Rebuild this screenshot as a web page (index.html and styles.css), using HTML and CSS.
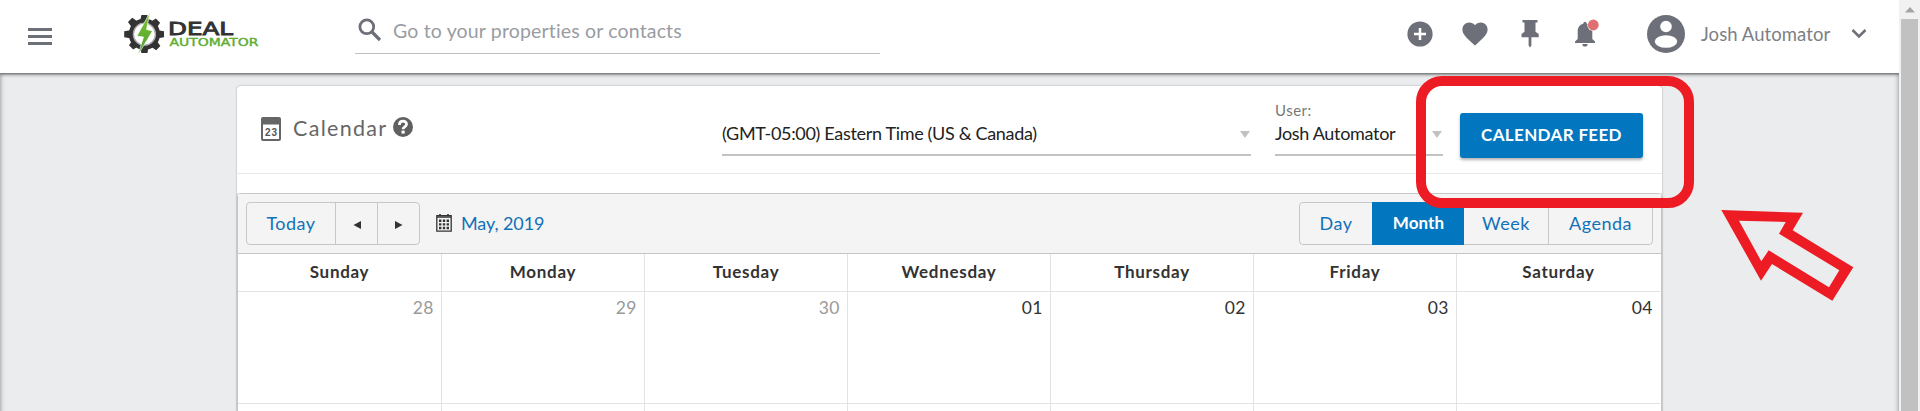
FILE: index.html
```
<!DOCTYPE html>
<html lang="en">
<head>
    <meta charset="UTF-8">
    <meta name="viewport" content="width=device-width, initial-scale=1.0">
    <title>Calendar - Deal Automator</title>
    <link rel="stylesheet" href="styles.css">
</head>
<body>

    <div class="page">
        <header class="topbar">
            <button class="menu-button" aria-label="Menu"><span></span><span></span><span></span></button>

            <!-- Logo -->
            <svg class="logo" width="140" height="50" viewBox="122 9 140 50">
                <defs>
                    <linearGradient id="green" x1="0" y1="0" x2="0" y2="1">
                        <stop offset="0" stop-color="#7ac92e"/>
                        <stop offset="1" stop-color="#4f9a32"/>
                    </linearGradient>
                </defs>
                <g fill="#333">
                    <g id="teeth">
                        <path d="M141.4 15h6l1 5h-8zM141.4 53h6l1-5h-8z"/>
                        <path d="M124.2 31.200v6l6 1v-8zM164 31.200v6l-6 1v-8z"/>
                    </g>
                    <use href="#teeth" transform="rotate(45 144.4 34.200)"/>
                </g>
                <circle cx="144.400" cy="34.200" r="13.400" fill="#fff" stroke="#333" stroke-width="4.500"/>
                <circle cx="144.400" cy="34.200" r="11" fill="none" stroke="#a9a9a9" stroke-width="1.300"/>
                <path d="M150 12.300 137 36l6.500 1-5.500 18 14.500-24-6-1.500z" fill="url(#green)" stroke="#fff" stroke-width=".6"/>
                <text class="logo-deal" x="168" y="35" textLength="65" lengthAdjust="spacingAndGlyphs">DEAL</text>
                <text class="logo-auto" x="169.500" y="46" textLength="89" lengthAdjust="spacingAndGlyphs">AUTOMATOR</text>
            </svg>

            <div class="search">
                <svg width="24" height="24" viewBox="0 0 24 24"><circle cx="8.800" cy="8.800" r="6.900" fill="none" stroke="#6d7078" stroke-width="2.800"/><path d="M13.500 13.500 22 22" stroke="#6d7078" stroke-width="3.200"/></svg>
                <span>Go to your properties or contacts</span>
            </div>

            <nav class="actions">
                <svg width="26" height="28" viewBox="0 0 26 28"><circle cx="13" cy="14" r="12.600"/><path class="cut" d="M13 8v12M7 14h12"/></svg>
                <svg width="26" height="28" viewBox="0 0 26 28"><path d="M13 25.500 11.200 23.900C4.600 18 .4 14.300.4 9.500.4 5.700 3.400 2.600 7.300 2.600c2.200 0 4.300 1 5.700 2.700 1.400-1.700 3.500-2.700 5.700-2.700 3.900 0 6.900 3.100 6.900 6.900 0 4.800-4.200 8.500-10.800 14.400z"/></svg>
                <svg width="26" height="28" viewBox="0 0 26 28"><path d="M5.500 0h15v2.600h-2v9.200l3.200 2.200v3.200h-7.300v8.300L13 27.500l-1.400-2v-8.300H4.500V14l3-2.200V2.600h-2z"/></svg>
                <svg width="26" height="28" viewBox="0 0 26 28"><path d="M13 2c1 0 1.700.7 1.800 1.700 3.500.8 5.500 3.700 5.500 7.500V19l2.700 2.600V23H3v-1.400L5.700 19v-7.800c0-3.800 2-6.700 5.500-7.500C11.300 2.700 12 2 13 2zM10.400 24h5.200a2.600 2.600 0 0 1-5.200 0z"/><circle cx="21.300" cy="5" r="6" fill="#fff"/><circle cx="21.300" cy="5" r="5.400" fill="#df6f70"/></svg>
            </nav>

            <div class="account">
                <svg width="38" height="38" viewBox="0 0 38 38"><circle cx="19" cy="19" r="19" fill="#6d7078"/><circle cx="19" cy="11.500" r="5.800" fill="#fff"/><ellipse cx="19" cy="26.500" rx="11.200" ry="6.300" fill="#fff"/></svg>
                <span>Josh Automator</span>
                <svg width="16" height="12" viewBox="0 0 16 12"><path d="m1.500 2 6.500 6.500L14.500 2" fill="none" stroke="#6d7078" stroke-width="2.500"/></svg>
            </div>
        </header>

        <main class="content">
            <section class="card">
                <div class="card-header">
                    <svg class="title-icon" width="20" height="25" viewBox="0 0 20 25"><path fill="#666" d="M2 0h16q2 0 2 2v20q0 2-2 2H2q-2 0-2-2V2Q0 0 2 0z"/><path fill="#fff" d="M2 7.500h16V22H2z"/><text x="4" y="18.500" textLength="12">23</text></svg>
                    <h1>Calendar</h1>
                    <svg class="help" width="20" height="20" viewBox="0 0 20 20"><circle cx="10" cy="10" r="10" fill="#606060"/><path d="M6.500 8V7.500C6.500 3 13.500 3 13.500 7.300c0 2.700-3.500 2.400-3.500 5" fill="none" stroke="#fff" stroke-width="2.800"/><path fill="#fff" d="M8.500 13.600h3.200v3H8.500z"/></svg>

                    <div class="select timezone">
                        <span>(GMT-05:00) Eastern Time (US &amp; Canada)</span>
                        <i class="caret"></i>
                    </div>
                    <div class="user-field">
                        <label>User:</label>
                        <div class="select">
                            <span>Josh Automator</span>
                            <i class="caret"></i>
                        </div>
                    </div>
                    <button class="feed-button">CALENDAR FEED</button>
                </div>

                <div class="scheduler">
                    <div class="toolbar">
                        <div class="button-group">
                            <button class="today">Today</button>
                            <button class="arrow"><svg width="8" height="8"><path d="M8 0v8L.5 4z"/></svg></button>
                            <button class="arrow"><svg width="8" height="8"><path d="M0 0v8l7.500-4z"/></svg></button>
                        </div>
                        <svg class="date-icon" width="16" height="18" viewBox="0 0 16 18"><path fill="none" stroke="#333" stroke-width="1.300" d="M.8 1.600h14.400v15.600H.8z"/><path stroke="#333" stroke-width="1.600" d="M1 3h14M4 0v2M12 0v2"/><path stroke="#333" stroke-width="2.400" stroke-dasharray="2.400 1.400" d="M3 6.800h10M3 10.400h10M3 14h10"/></svg>
                        <a class="date-label">May, 2019</a>
                        <div class="button-group views">
                            <button class="day">Day</button>
                            <button class="month active">Month</button>
                            <button class="week">Week</button>
                            <button class="agenda">Agenda</button>
                        </div>
                    </div>

                    <div class="grid">
                        <div class="weekday">Sunday</div>
                        <div class="weekday">Monday</div>
                        <div class="weekday">Tuesday</div>
                        <div class="weekday">Wednesday</div>
                        <div class="weekday">Thursday</div>
                        <div class="weekday">Friday</div>
                        <div class="weekday">Saturday</div>
                        <div class="cell other">28</div>
                        <div class="cell other">29</div>
                        <div class="cell other">30</div>
                        <div class="cell">01</div>
                        <div class="cell">02</div>
                        <div class="cell">03</div>
                        <div class="cell">04</div>
                        <div class="cell"></div>
                        <div class="cell"></div>
                        <div class="cell"></div>
                        <div class="cell"></div>
                        <div class="cell"></div>
                        <div class="cell"></div>
                        <div class="cell"></div>
                    </div>
                </div>
            </section>
        </main>
    </div>

    <div class="scrollbar">
        <svg width="10" height="6"><path d="M0 5.500 5 0l5 5.500z" fill="#a3a3a3"/></svg>
        <div class="thumb"></div>
    </div>

    <!-- Callout over the feed button -->
    <div class="callout"></div>
    <svg class="callout-arrow" width="136" height="94" viewBox="1720 208 136 94">
        <path fill="#ed1c24" fill-rule="evenodd" d="M1721.300 210 1803 212.800 1792.700 230.300 1853.300 267.300 1832.300 300.700 1772 264 1761 280.700zM1739 220.700 1785.700 222 1779 233.700 1839.300 270.300 1829 287.300 1768.700 250.300 1761.300 261.300z"/>
    </svg>

</body>
</html>
```
FILE: styles.css
```
* {
    box-sizing: border-box;
}

body {
    margin: 0;
    height: 411px;
    display: flex;
    overflow: hidden;
    background: #ebecee;
    font-family: Lato, "Liberation Sans", sans-serif;
    font-size: 18px;
    color: #222;
}

button {
    font: inherit;
    letter-spacing: inherit;
    border: none;
    background: none;
    padding: 0;
}

svg {
    display: block;
    flex: none;
}

.page {
    width: 1899px;
    height: 411px;
    overflow: hidden;
}

/* Top bar */
.topbar {
    height: 73px;
    padding: 0 32px 5px 28px;
    display: flex;
    align-items: center;
    background: #fff;
    box-shadow: 0 1px 3px rgba(0, 0, 0, 0.5);
    position: relative;
    z-index: 1;
}

.menu-button {
    width: 24px;
    display: flex;
    flex-direction: column;
    gap: 4px;
    padding-top: 4px;
}

.menu-button span {
    height: 3px;
    background: #6d7078;
}

.logo {
    margin-left: 70px;
}

.logo-deal {
    font: 18px "DejaVu Sans", sans-serif;
    fill: #333;
    stroke: #333;
    stroke-width: 0.9;
}

.logo-auto {
    font: 11px "DejaVu Sans", sans-serif;
    fill: #60ad30;
    stroke: #60ad30;
    stroke-width: 0.4;
}

/* Search field */
.search {
    width: 525px;
    height: 40px;
    margin: 14px 0 0 93px;
    padding: 0 0 7px 3px;
    display: flex;
    align-items: center;
    gap: 11px;
    align-self: flex-start;
    border-bottom: 1px solid #bfc0c3;
    font-size: 19.5px;
    letter-spacing: 0.16px;
    color: #999ca2;
}

.actions {
    display: flex;
    gap: 29px;
    margin-left: auto;
}

.actions svg {
    fill: #6d7078;
    overflow: visible;
}

.actions .cut {
    stroke: #fff;
    stroke-width: 2.5;
}

.account {
    display: flex;
    align-items: center;
    margin-left: 49px;
    color: #7c7f86;
    font-size: 18.5px;
    letter-spacing: 0.08px;
}

.account span {
    width: 131px;
    margin: 0 19px 0 16px;
    white-space: nowrap;
}

/* Calendar card */
.content {
    height: 360px;
    padding: 13px 237px 0;
    box-shadow: inset 0 0 5px rgba(0, 0, 0, 0.45);
    overflow: hidden;
}

.card {
    height: 400px;
    background: #fff;
    border-radius: 4px;
    box-shadow: 0 0 2px rgba(0, 0, 0, 0.35);
}

.card-header {
    height: 88px;
    padding: 0 19px 0 24px;
    display: flex;
    align-items: flex-start;
    border-bottom: 1px solid #e8e8e8;
}

.title-icon {
    margin-top: 31px;
}

.title-icon text {
    font: bold 10px "Liberation Sans", sans-serif;
    fill: #555;
}

.card-header h1 {
    width: 93px;
    margin: 30px 7px 0 12px;
    font-size: 21.5px;
    font-weight: normal;
    line-height: 24px;
    letter-spacing: 1.3px;
    color: #666;
    white-space: nowrap;
}

.help {
    margin-top: 31px;
}

.select {
    height: 37px;
    display: flex;
    align-items: center;
    justify-content: space-between;
    padding: 0 1px 7px 0;
    border-bottom: 2px solid #c3c3c3;
    letter-spacing: -0.32px;
    white-space: nowrap;
}

.timezone {
    width: 529px;
    margin: 33px 24px 0 309px;
}

.caret {
    border: 5.5px solid transparent;
    border-top: 7px solid #c1c1c1;
    border-bottom: none;
    margin-top: 2px;
}

.user-field {
    width: 168px;
    padding-top: 15px;
}

.user-field label {
    display: block;
    height: 18px;
    line-height: 18px;
    font-size: 15px;
    letter-spacing: 0.5px;
    color: #777;
}

.feed-button {
    width: 183px;
    height: 45px;
    margin: 27px 0 0 auto;
    padding-bottom: 2px;
    border-radius: 3px;
    background: #0277bf;
    box-shadow: 0 2px 3px rgba(0, 0, 0, 0.3);
    color: #fff;
    font-weight: bold;
    font-size: 17px;
    letter-spacing: 0.35px;
}

/* Scheduler */
.scheduler {
    height: 300px;
    margin-top: 19px;
    border: 1px solid #c5c6c7;
    border-radius: 4px;
    box-shadow: 0 0 0 1px #cacbcd;
    clip-path: inset(0 -2px -2px -2px);
}

.toolbar {
    height: 60px;
    padding: 0 8px;
    display: flex;
    align-items: center;
    background: #f4f4f4;
    border-bottom: 1px solid #c5c6c7;
    color: #1271b8;
    letter-spacing: 0.5px;
}

.button-group {
    height: 43px;
    display: flex;
    border: 1px solid #c8c8c8;
    border-radius: 4px;
}

.button-group button {
    color: inherit;
    display: flex;
    align-items: center;
    justify-content: center;
    padding-bottom: 2px;
}

.button-group button + button {
    border-left: 1px solid #c8c8c8;
}

.today {
    width: 88px;
}

.button-group .arrow {
    width: 42px;
    padding: 3px 0 0;
}

.arrow svg {
    fill: #333;
}

.date-icon {
    margin: -2px 9px 0 16px;
}

.date-label {
    padding-bottom: 2px;
    letter-spacing: -0.1px;
}

.views {
    margin-left: auto;
}

.day {
    width: 72px;
}

.button-group .active {
    width: 92px;
    margin: -1px 0;
    border-color: #0277bf;
    background: #0277bf;
    color: #fff;
    font-weight: bold;
    font-size: 17px;
    letter-spacing: 0.1px;
}

.views .active + button {
    width: 84px;
    border-left: none;
}

.views .agenda {
    width: 104px;
}

/* Month grid */
.grid {
    display: grid;
    grid-template-columns: 204px repeat(6, 203px);
    grid-template-rows: 38px 112px 112px;
}

.weekday,
.cell {
    border-right: 1px solid #e3e3e3;
    border-bottom: 1px solid #e3e3e3;
}

.weekday:nth-child(7n),
.cell:nth-child(7n) {
    border-right: none;
}

.weekday {
    text-align: center;
    line-height: 36px;
    font-size: 17px;
    font-weight: bold;
    letter-spacing: 0.7px;
    color: #333;
}

.cell {
    padding: 4px 7px 0 0;
    text-align: right;
    line-height: 24px;
    font-size: 17.5px;
    letter-spacing: 0.5px;
    color: #333;
}

.other {
    color: #999;
}

/* Window scrollbar */
.scrollbar {
    width: 21px;
    height: 411px;
    padding: 7px 2px 0;
    display: flex;
    flex-direction: column;
    align-items: center;
    gap: 6px;
    background: #f1f1f1;
}

.thumb {
    width: 17px;
    flex: 1;
    background: #c1c1c1;
}

.callout {
    position: absolute;
    left: 1416px;
    top: 76px;
    width: 278px;
    height: 132px;
    border: 10px solid #ed1c24;
    border-radius: 26px;
    z-index: 2;
}

.callout-arrow {
    position: absolute;
    left: 1720px;
    top: 208px;
    z-index: 2;
}
```
